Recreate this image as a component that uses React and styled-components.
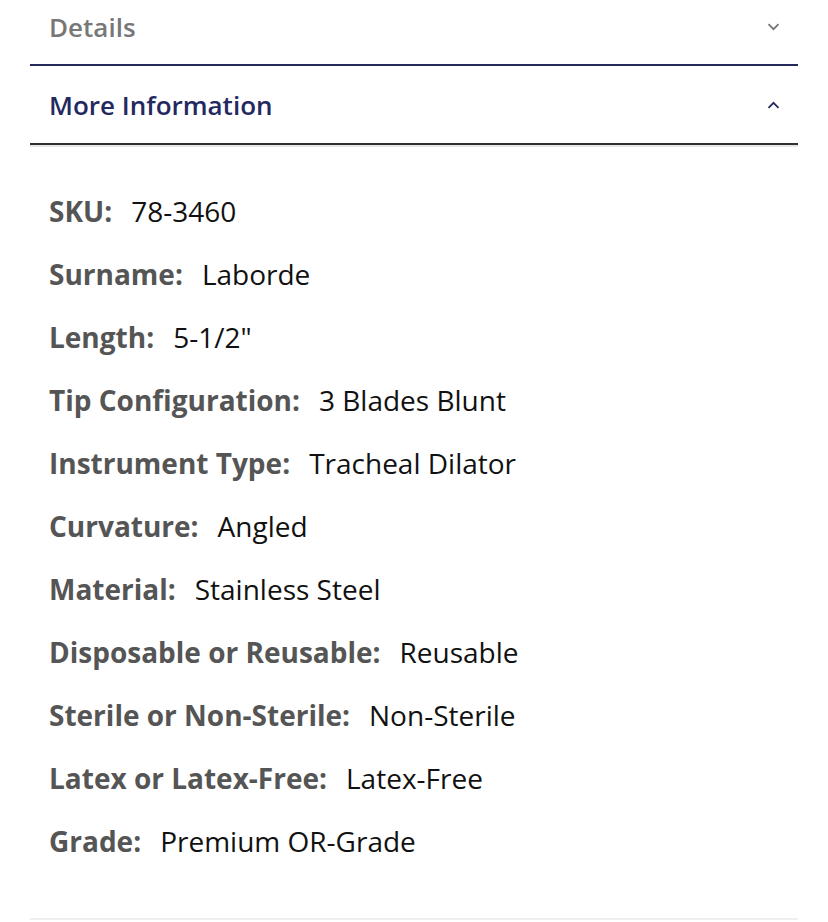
import React from "react";
import styled, { createGlobalStyle } from "styled-components";

const GlobalStyle = createGlobalStyle`
  html, body { margin: 0; padding: 0; background: #fff; }
  body { font-family: "Open Sans", "Noto Sans", sans-serif; -webkit-font-smoothing: antialiased; }
`;

const Page = styled.div`
  padding: 0 30px;
`;

const Section = styled.section`
  border-bottom: ${(p) => (p.$open ? "2px solid #2f2f33" : "2px solid #23295a")};
  box-shadow: ${(p) => (p.$open ? "0 2px 0 #e6e6e6" : "none")};
`;

const Header = styled.button`
  all: unset;
  box-sizing: border-box;
  display: flex;
  align-items: center;
  justify-content: space-between;
  width: 100%;
  height: ${(p) => p.$h}px;
  padding: 0 18px ${(p) => p.$lift || 0}px 19px;
  cursor: pointer;
`;

const Title = styled.span`
  font-family: "Open Sans", sans-serif;
  font-size: 26px;
  font-weight: 600;
  color: ${(p) => (p.$open ? "#23295f" : "#777")};
`;

const Chevron = styled.svg`
  width: 13px;
  height: 8px;
  flex: none;
`;

const Body = styled.dl`
  margin: 0;
  padding: 48px 19px 32px;
  display: flex;
  flex-direction: column;
`;

const Row = styled.div`
  display: flex;
  align-items: baseline;
  height: 63px;
  font-size: 28px;
  line-height: 36px;
`;

const Label = styled.dt`
  font-weight: 700;
  color: #555;
  margin-right: 19px;
`;

const Value = styled.dd`
  margin: 0;
  font-weight: 400;
  color: #111;
`;

const Footer = styled.div`
  height: 2px;
  background: #eeeeee;
`;

const specs = [
  ["SKU:", "78-3460"],
  ["Surname:", "Laborde"],
  ["Length:", '5-1/2"'],
  ["Tip Configuration:", "3 Blades Blunt"],
  ["Instrument Type:", "Tracheal Dilator"],
  ["Curvature:", "Angled"],
  ["Material:", "Stainless Steel"],
  ["Disposable or Reusable:", "Reusable"],
  ["Sterile or Non-Sterile:", "Non-Sterile"],
  ["Latex or Latex-Free:", "Latex-Free"],
  ["Grade:", "Premium OR-Grade"],
];

function Arrow({ up, color }) {
  return (
    <Chevron viewBox="0 0 13 8" fill="none">
      <path
        d={up ? "M1.5 6.8 L6.5 1.8 L11.5 6.8" : "M1.5 1.2 L6.5 6.2 L11.5 1.2"}
        stroke={color}
        strokeWidth="1.8"
      />
    </Chevron>
  );
}

export default function App() {
  return (
    <>
      <GlobalStyle />
      <Page>
        <Section>
          <Header $h={64} $lift={10}>
            <Title>Details</Title>
            <Arrow color="#777" />
          </Header>
        </Section>
        <Section $open>
          <Header $h={77}>
            <Title $open>More Information</Title>
            <Arrow up color="#23295f" />
          </Header>
        </Section>
        <Body>
          {specs.map(([k, v]) => (
            <Row key={k}>
              <Label>{k}</Label>
              <Value>{v}</Value>
            </Row>
          ))}
        </Body>
        <Footer />
      </Page>
    </>
  );
}
